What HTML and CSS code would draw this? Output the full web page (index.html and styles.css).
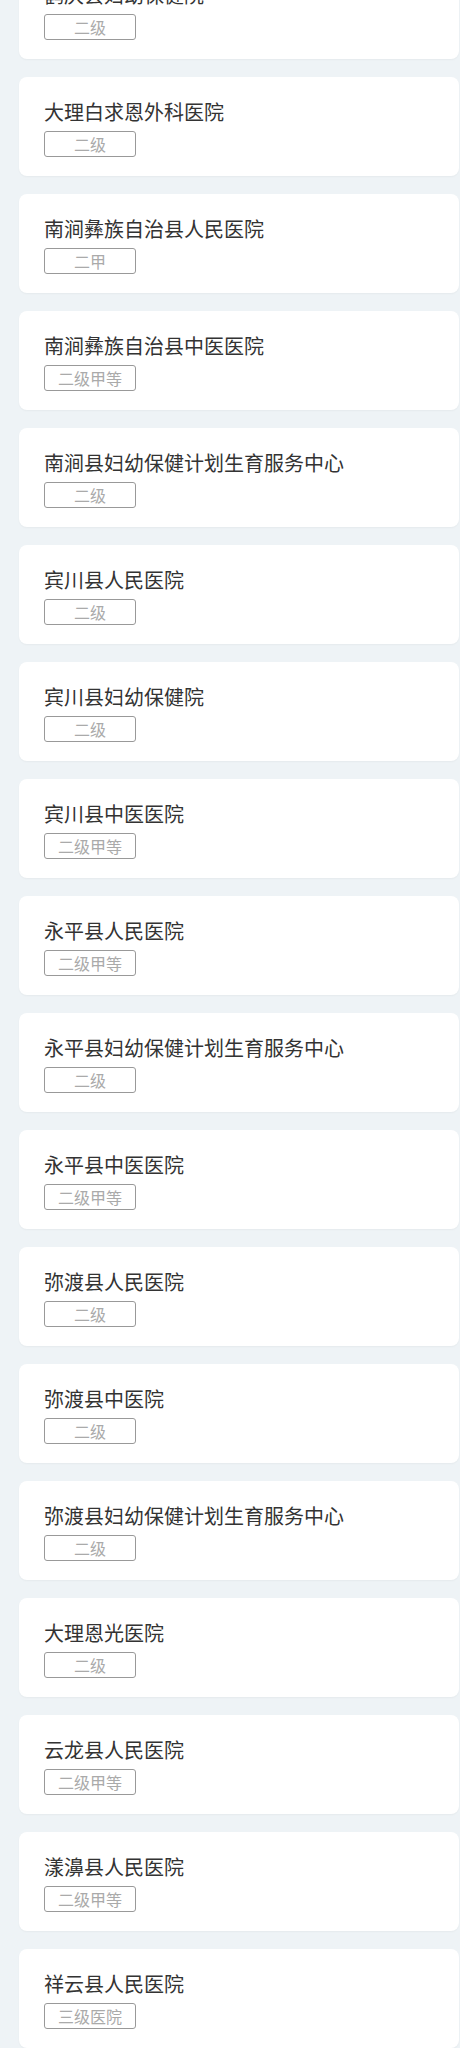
FILE: index.html
```html
<!DOCTYPE html>
<html lang="zh-CN">
<head>
<meta charset="utf-8">
<link rel="stylesheet" href="styles.css">
</head>
<body>
<div class="list">
  <div class="card"><div class="name">鹤庆县妇幼保健院</div><div class="tag">二级</div></div>
  <div class="card"><div class="name">大理白求恩外科医院</div><div class="tag">二级</div></div>
  <div class="card"><div class="name">南涧彝族自治县人民医院</div><div class="tag">二甲</div></div>
  <div class="card"><div class="name">南涧彝族自治县中医医院</div><div class="tag">二级甲等</div></div>
  <div class="card"><div class="name">南涧县妇幼保健计划生育服务中心</div><div class="tag">二级</div></div>
  <div class="card"><div class="name">宾川县人民医院</div><div class="tag">二级</div></div>
  <div class="card"><div class="name">宾川县妇幼保健院</div><div class="tag">二级</div></div>
  <div class="card"><div class="name">宾川县中医医院</div><div class="tag">二级甲等</div></div>
  <div class="card"><div class="name">永平县人民医院</div><div class="tag">二级甲等</div></div>
  <div class="card"><div class="name">永平县妇幼保健计划生育服务中心</div><div class="tag">二级</div></div>
  <div class="card"><div class="name">永平县中医医院</div><div class="tag">二级甲等</div></div>
  <div class="card"><div class="name">弥渡县人民医院</div><div class="tag">二级</div></div>
  <div class="card"><div class="name">弥渡县中医院</div><div class="tag">二级</div></div>
  <div class="card"><div class="name">弥渡县妇幼保健计划生育服务中心</div><div class="tag">二级</div></div>
  <div class="card"><div class="name">大理恩光医院</div><div class="tag">二级</div></div>
  <div class="card"><div class="name">云龙县人民医院</div><div class="tag">二级甲等</div></div>
  <div class="card"><div class="name">漾濞县人民医院</div><div class="tag">二级甲等</div></div>
  <div class="card"><div class="name">祥云县人民医院</div><div class="tag">三级医院</div></div>
</div>
</body>
</html>
```
FILE: styles.css
```css
html, body {
  margin: 0;
  padding: 0;
  background: #eef3f6;
  font-family: "Noto Sans CJK SC", "Noto Sans", sans-serif;
}
.list {
  margin-top: -40px;
  padding-left: 19px;
  display: flex;
  flex-direction: column;
  gap: 18px;
}
.card {
  box-sizing: border-box;
  width: 440px;
  height: 99px;
  background: #fff;
  border-radius: 8px;
  padding: 21px 25px 0 25px;
  box-shadow: 0 1px 2px rgba(0, 0, 0, 0.04);
}
.name {
  font-size: 20px;
  line-height: 28px;
  color: #333;
}
.tag {
  box-sizing: border-box;
  margin-top: 5px;
  width: 92px;
  height: 26px;
  border: 1px solid #999;
  border-radius: 3px;
  text-align: center;
  font-size: 16px;
  line-height: 24px;
  color: #aaa;
}
```
